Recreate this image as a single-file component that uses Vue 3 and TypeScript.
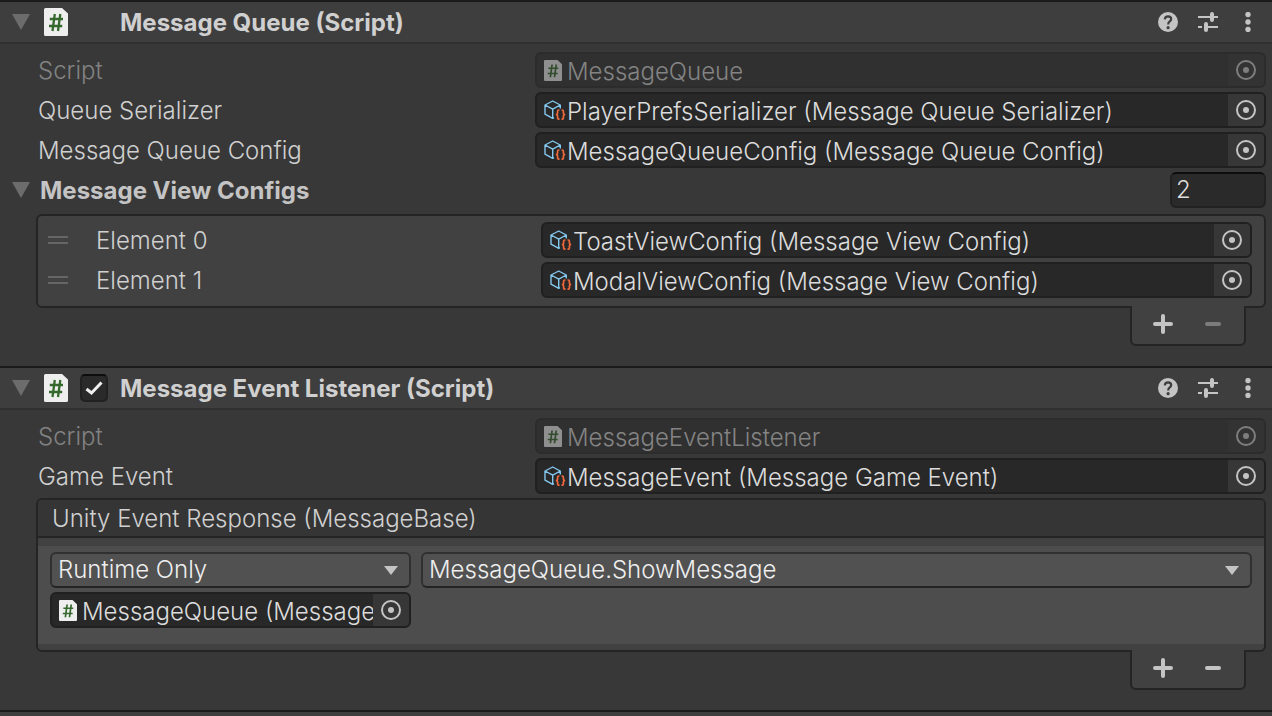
<script setup lang="ts">
import { defineComponent, h, reactive, ref } from 'vue'

type IconKind = 'script' | 'asset'

interface ObjectRow {
  id: string
  label: string
  value: string
  icon: IconKind
  disabled?: boolean
}

const queueRows: ObjectRow[] = [
  { id: 'queue-script', label: 'Script', value: 'MessageQueue', icon: 'script', disabled: true },
  { id: 'queue-serializer', label: 'Queue Serializer', value: 'PlayerPrefsSerializer (Message Queue Serializer)', icon: 'asset' },
  { id: 'queue-config', label: 'Message Queue Config', value: 'MessageQueueConfig (Message Queue Config)', icon: 'asset' },
]

const viewRows: ObjectRow[] = [
  { id: 'view-0', label: 'Element 0', value: 'ToastViewConfig (Message View Config)', icon: 'asset' },
  { id: 'view-1', label: 'Element 1', value: 'ModalViewConfig (Message View Config)', icon: 'asset' },
]

const listenerRows: ObjectRow[] = [
  { id: 'listener-script', label: 'Script', value: 'MessageEventListener', icon: 'script', disabled: true },
  { id: 'listener-event', label: 'Game Event', value: 'MessageEvent (Message Game Event)', icon: 'asset' },
]

const open = reactive({ queue: true, views: true, listener: true })
const enabled = ref(true)
const size = ref('2')
const callState = ref('Runtime Only')
const handler = ref('MessageQueue.ShowMessage')
const target = ref('MessageQueue (Message')

const ScriptIcon = defineComponent({
  setup: () => () =>
    h('svg', { viewBox: '0 0 24 28', 'aria-hidden': 'true' }, [
      h('path', { d: 'M1.5 0H18l6 5.500V26.500A1.500 1.500 0 0 1 22.500 28H1.500A1.500 1.500 0 0 1 0 26.500V1.500A1.500 1.500 0 0 1 1.500 0Z', fill: '#eeeeee' }),
      h('path', { d: 'M10.800 6 8.500 23M16.300 6 14 23M5.800 11H19M5 18H18.200', fill: 'none', stroke: '#34682c', 'stroke-width': '2.3' }),
    ]),
})

const AssetIcon = defineComponent({
  setup: () => () =>
    h('svg', { viewBox: '0 0 22 20', 'aria-hidden': 'true' }, [
      h('path', {
        d: 'M10 17.600 8.700 18.300 1 14.200V5L8.700 1 16.300 5V8.500M1 5 8.700 9.200 16.300 5M8.700 9.200V18.300',
        fill: 'none', stroke: '#84c8ee', 'stroke-width': '1.400', 'stroke-linejoin': 'round',
      }),
      h('path', {
        d: 'M15.500 10H14.800Q13.600 10 13.600 11.200V13.200Q13.600 14.500 11.800 14.500Q13.600 14.500 13.600 15.800V18Q13.600 19.200 14.800 19.200H15.500M17.500 10H18.200Q19.400 10 19.400 11.200V13.200Q19.400 14.500 21.200 14.500Q19.400 14.500 19.400 15.800V18Q19.400 19.200 18.200 19.200H17.500',
        fill: 'none', stroke: '#f0693c', 'stroke-width': '1.700',
      }),
    ]),
})

const PickIcon = defineComponent({
  setup: () => () =>
    h('svg', { viewBox: '0 0 20 20', 'aria-hidden': 'true' }, [
      h('circle', { cx: 10, cy: 10, r: 9, fill: 'none', stroke: 'currentColor', 'stroke-width': 2 }),
      h('circle', { cx: 10, cy: 10, r: 3, fill: 'currentColor' }),
    ]),
})

const ObjectField = defineComponent({
  props: {
    labelledby: { type: String, required: true },
    value: { type: String, required: true },
    icon: { type: String, required: true },
    disabled: { type: Boolean, default: false },
  },
  setup: (props) => () =>
    h('div', { class: ['object-field', { disabled: props.disabled }], role: 'group', 'aria-labelledby': props.labelledby }, [
      h('span', { class: ['object-value', props.icon] }, [
        h(props.icon === 'script' ? ScriptIcon : AssetIcon),
        h('span', { class: 'object-name' }, props.value),
      ]),
      h('button', { class: 'pick', type: 'button', disabled: props.disabled, 'aria-labelledby': props.labelledby }, [h(PickIcon)]),
    ]),
})

const HeaderTools = defineComponent({
  setup: () => () =>
    h('div', { class: 'tools' }, [
      h('button', { type: 'button', 'aria-label': 'Help' }, [
        h('svg', { viewBox: '0 0 20 20', 'aria-hidden': 'true' }, [
          h('circle', { cx: 10, cy: 10, r: 10, fill: '#c4c4c4' }),
          h('path', { d: 'M6.800 7.400Q7 4.300 10.100 4.300Q13.200 4.400 13.200 7Q13.200 8.500 11.500 9.600Q10.200 10.500 10.200 12.500', fill: 'none', stroke: '#3e3e3e', 'stroke-width': 2.2 }),
          h('circle', { cx: 10.1, cy: 15.7, r: 1.6, fill: '#3e3e3e' }),
        ]),
      ]),
      h('button', { type: 'button', 'aria-label': 'Presets' }, [
        h('svg', { viewBox: '0 0 20 20', 'aria-hidden': 'true' }, [
          h('path', { d: 'M0 5H12M16 5H20M0 15H4M10 15H20', stroke: '#c4c4c4', 'stroke-width': 2, fill: 'none' }),
          h('path', { d: 'M14 2V8M8 12V18', stroke: '#c4c4c4', 'stroke-width': 4, 'stroke-linecap': 'round' }),
        ]),
      ]),
      h('button', { type: 'button', 'aria-label': 'More' }, [
        h('svg', { viewBox: '0 0 20 20', 'aria-hidden': 'true', fill: '#c4c4c4' }, [
          h('circle', { cx: 10, cy: 2.5, r: 2.7 }),
          h('circle', { cx: 10, cy: 10, r: 2.7 }),
          h('circle', { cx: 10, cy: 17.5, r: 2.7 }),
        ]),
      ]),
    ]),
})

const ListFooter = defineComponent({
  props: { removable: { type: Boolean, default: true } },
  setup: (props) => () =>
    h('div', { class: 'list-footer' }, [
      h('button', { type: 'button', 'aria-label': 'Add' }, [
        h('svg', { viewBox: '0 0 20 20', 'aria-hidden': 'true' }, [
          h('path', { d: 'M2 10H18M10 2V18', stroke: 'currentColor', 'stroke-width': 4, 'stroke-linecap': 'round' }),
        ]),
      ]),
      h('button', { type: 'button', 'aria-label': 'Remove', disabled: !props.removable }, [
        h('svg', { viewBox: '0 0 20 20', 'aria-hidden': 'true' }, [
          h('path', { d: 'M4 10H16', stroke: 'currentColor', 'stroke-width': 4, 'stroke-linecap': 'round' }),
        ]),
      ]),
    ]),
})
</script>

<template>
  <main class="inspector">
    <section class="component">
      <header class="component-header">
        <button class="foldout" type="button" aria-label="Message Queue" :aria-expanded="open.queue" @click="open.queue = !open.queue">
          <svg viewBox="0 0 18 16" aria-hidden="true"><path d="M0 0H18L9 16Z" /></svg>
        </button>
        <ScriptIcon class="header-icon" />
        <span class="toggle-slot"></span>
        <h2>Message Queue (Script)</h2>
        <HeaderTools />
      </header>
      <div v-if="open.queue" class="body">
        <div v-for="row in queueRows" :key="row.id" class="row">
          <span :id="row.id" class="label" :class="{ dim: row.disabled }">{{ row.label }}</span>
          <ObjectField :labelledby="row.id" :value="row.value" :icon="row.icon" :disabled="row.disabled" />
        </div>
        <div class="row list-title">
          <button class="foldout" type="button" aria-labelledby="views-label" :aria-expanded="open.views" @click="open.views = !open.views">
            <svg viewBox="0 0 18 16" aria-hidden="true"><path d="M0 0H18L9 16Z" /></svg>
          </button>
          <label id="views-label" for="views-size" class="bold">Message View Configs</label>
          <input id="views-size" v-model="size" class="size" type="text" inputmode="numeric" />
        </div>
        <template v-if="open.views">
          <ul class="box view-list">
            <li v-for="row in viewRows" :key="row.id" class="row">
              <span class="grip"></span>
              <span :id="row.id" class="label">{{ row.label }}</span>
              <ObjectField :labelledby="row.id" :value="row.value" :icon="row.icon" />
            </li>
          </ul>
          <ListFooter :removable="false" />
        </template>
      </div>
    </section>

    <section class="component">
      <header class="component-header">
        <button class="foldout" type="button" aria-label="Message Event Listener" :aria-expanded="open.listener" @click="open.listener = !open.listener">
          <svg viewBox="0 0 18 16" aria-hidden="true"><path d="M0 0H18L9 16Z" /></svg>
        </button>
        <ScriptIcon class="header-icon" />
        <span class="toggle-slot">
          <input id="listener-enabled" v-model="enabled" type="checkbox" />
          <svg v-if="enabled" viewBox="0 0 28 28" aria-hidden="true"><path d="M6.500 15 11.500 19 21.500 8.500" /></svg>
        </span>
        <h2><label for="listener-enabled">Message Event Listener (Script)</label></h2>
        <HeaderTools />
      </header>
      <div v-if="open.listener" class="body">
        <div v-for="row in listenerRows" :key="row.id" class="row">
          <span :id="row.id" class="label" :class="{ dim: row.disabled }">{{ row.label }}</span>
          <ObjectField :labelledby="row.id" :value="row.value" :icon="row.icon" :disabled="row.disabled" />
        </div>
        <div class="box event-box">
          <h3 id="event-title">Unity Event Response (MessageBase)</h3>
          <div class="event-entry">
            <div class="event-side">
              <span class="dropdown">
                <select v-model="callState" aria-label="Call state">
                  <option>Runtime Only</option>
                </select>
                <svg viewBox="0 0 14 9" aria-hidden="true"><path d="M0 0H14L7 9Z" /></svg>
              </span>
              <ObjectField labelledby="event-title" :value="target" icon="script" />
            </div>
            <span class="dropdown">
              <select v-model="handler" aria-label="Function">
                <option>MessageQueue.ShowMessage</option>
              </select>
              <svg viewBox="0 0 14 9" aria-hidden="true"><path d="M0 0H14L7 9Z" /></svg>
            </span>
          </div>
        </div>
        <ListFooter />
      </div>
    </section>
    <div class="component-edge"></div>
  </main>
</template>

<style>
html,
body {
  background: #383838;
}
</style>

<style scoped>
.inspector {
  display: flex;
  flex-direction: column;
  min-height: 100vh;
  box-sizing: border-box;
  overflow: hidden;
  background: #383838;
  color: #d0d0d0;
  font: 300 24px/36px Inter, "Liberation Sans", sans-serif;
}
.inspector :deep(*) {
  box-sizing: border-box;
}
.inspector :deep(svg) {
  display: block;
  flex: none;
}
.inspector :deep(button) {
  display: flex;
  align-items: center;
  justify-content: center;
  padding: 0;
  border: 0;
  background: none;
  color: #c4c4c4;
}
.component-header {
  display: flex;
  align-items: center;
  height: 44px;
  padding: 0 14px 0 12px;
  border-top: 2px solid #1a1a1a;
  border-bottom: 2px solid #303030;
  background: #3e3e3e;
}
.foldout {
  flex: none;
  width: 18px;
  height: 36px;
}
.foldout svg {
  width: 18px;
  height: 16px;
  fill: #6c6c6c;
}
.header-icon {
  width: 24px;
  height: 28px;
  margin-left: 14px;
}
.toggle-slot {
  position: relative;
  flex: none;
  width: 28px;
  height: 28px;
  margin: 0 12px;
}
.toggle-slot input {
  display: block;
  appearance: none;
  width: 28px;
  height: 28px;
  margin: 0;
  border: 2px solid #212121;
  border-top-color: #0d0d0d;
  border-radius: 5px;
  background: #2a2a2a;
}
.toggle-slot svg {
  position: absolute;
  inset: 0;
  fill: none;
  stroke: #f0f0f0;
  stroke-width: 3;
  pointer-events: none;
}
h2,
h3,
ul {
  margin: 0;
  padding: 0;
  font: inherit;
  list-style: none;
}
h2 {
  flex: 1;
  padding-top: 2px;
  color: #d0d0d0;
  font-weight: 700;
  white-space: nowrap;
}
.inspector :deep(.tools) {
  display: flex;
  gap: 20px;
}
.inspector :deep(.tools button),
.inspector :deep(.tools svg) {
  width: 20px;
  height: 20px;
}
.body {
  display: flex;
  flex-direction: column;
  gap: 4px;
  padding: 8px 6px 20px 38px;
}
.row {
  display: flex;
  align-items: center;
  height: 36px;
}
.label {
  flex: none;
  width: 497px;
  padding-top: 2px;
  white-space: nowrap;
}
.dim {
  color: #828282;
}
.inspector :deep(.object-field) {
  display: flex;
  flex: 1;
  min-width: 0;
  height: 36px;
  border: 2px solid #202020;
  border-radius: 6px;
  background: #282828;
  overflow: hidden;
}
.inspector :deep(.object-value) {
  display: flex;
  flex: 1;
  align-items: center;
  min-width: 0;
  padding-left: 7px;
  overflow: hidden;
  color: #dcdcdc;
  white-space: nowrap;
}
.inspector :deep(.object-name) {
  padding-top: 3px;
  line-height: 32px;
}
.inspector :deep(.object-value.asset svg) {
  width: 22px;
  height: 20px;
  margin-right: 1px;
}
.inspector :deep(.object-value.script svg) {
  width: 18px;
  height: 21px;
  margin-right: 5px;
}
.inspector :deep(.pick) {
  flex: none;
  width: 36px;
  background: #373737;
}
.inspector :deep(.pick svg) {
  width: 20px;
  height: 20px;
}
.inspector :deep(.object-field.disabled) {
  border-color: #2c2c2c;
  background: #303030;
}
.inspector :deep(.disabled .object-value) {
  color: #848484;
}
.inspector :deep(.disabled .object-value svg) {
  opacity: 0.5;
}
.inspector :deep(.disabled .pick) {
  background: #333333;
  color: #7e7e7e;
}
.list-title {
  margin-left: -26px;
}
.bold {
  flex: 1;
  margin-left: 10px;
  padding-top: 2px;
  color: #c4c4c4;
  font-weight: 700;
}
.size {
  width: 96px;
  height: 36px;
  padding: 0 4px;
  border: 2px solid #212121;
  border-top-color: #0d0d0d;
  border-radius: 6px;
  background: #2a2a2a;
  color: #dcdcdc;
  font: inherit;
}
.box {
  margin-left: -2px;
  border: 2px solid #242424;
  border-radius: 6px;
  background: #414141;
}
.view-list {
  display: flex;
  flex-direction: column;
  gap: 4px;
  margin-top: 2px;
  padding: 6px 12px 8px 10px;
}
.view-list .label {
  width: 445px;
}
.grip {
  flex: none;
  width: 20px;
  height: 8px;
  margin-right: 28px;
  border: solid #656565;
  border-width: 2px 0;
}
.inspector :deep(.list-footer) {
  display: flex;
  align-self: flex-end;
  align-items: center;
  justify-content: space-between;
  width: 116px;
  height: 40px;
  margin: -6px 20px 0 0;
  padding: 0 21px 2px;
  border: 2px solid #242424;
  border-top: 0;
  border-radius: 0 0 6px 6px;
  background: #414141;
}
.inspector :deep(.list-footer svg) {
  width: 20px;
  height: 20px;
}
.inspector :deep(.list-footer button:disabled) {
  color: #7c7c7c;
}
.event-box {
  padding-bottom: 6px;
}
.event-box h3 {
  padding: 2px 14px 0;
  border-bottom: 2px solid #242424;
  border-radius: 4px 4px 0 0;
  background: #353535;
  line-height: 34px;
}
.event-entry {
  display: grid;
  grid-template-columns: 361px 1fr;
  align-items: start;
  column-gap: 10px;
  margin-top: 8px;
  padding: 6px 12px 16px;
  background: #4d4d4d;
}
.event-side {
  display: flex;
  flex-direction: column;
  gap: 4px;
}
.event-side :deep(.object-field) {
  flex: none;
}
.dropdown {
  position: relative;
  display: block;
  height: 36px;
}
.dropdown select {
  display: block;
  appearance: none;
  width: 100%;
  height: 36px;
  padding: 0 40px 0 6px;
  border: 2px solid #303030;
  border-bottom-color: #242424;
  border-radius: 6px;
  background: #515151;
  color: #eeeeee;
  font: inherit;
  line-height: 32px;
}
.dropdown svg {
  position: absolute;
  top: 14px;
  right: 13px;
  width: 14px;
  height: 9px;
  fill: #c4c4c4;
  pointer-events: none;
}
.component-edge {
  flex: 1;
  min-height: 6px;
  border-top: 2px solid #1a1a1a;
  background: #3e3e3e;
}
</style>
